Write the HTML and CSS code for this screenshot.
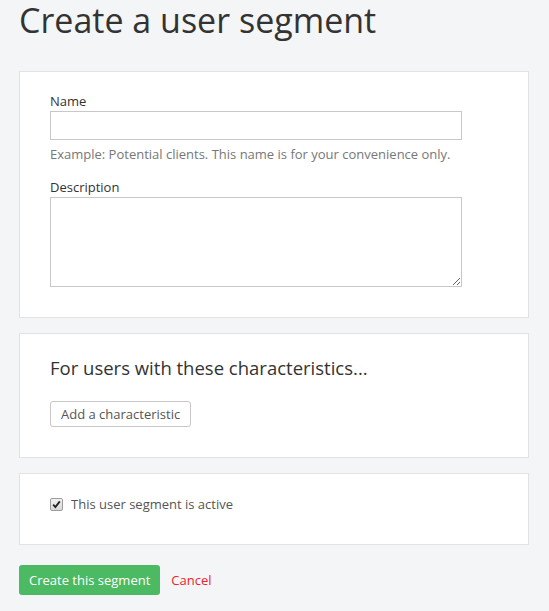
FILE: index.html
```html
<!DOCTYPE html>
<html lang="en">
<head>
<meta charset="utf-8">
<title>Create a user segment</title>
<link rel="stylesheet" href="styles.css">
</head>
<body>
<main class="page">
  <h1 class="page-title">Create a user segment</h1>
  <form class="segment-form">
    <section class="card">
      <div class="field">
        <label class="field-label" for="name">Name</label>
        <input class="text-input" id="name" type="text">
        <p class="help">Example: Potential clients. This name is for your convenience only.</p>
      </div>
      <div class="field field-desc">
        <label class="field-label" for="desc">Description</label>
        <textarea class="text-area" id="desc"></textarea>
      </div>
    </section>
    <section class="card card-chars">
      <h2 class="card-title">For users with these characteristics...</h2>
      <button type="button" class="btn-default">Add a characteristic</button>
    </section>
    <section class="card card-active">
      <label class="check-row">
        <span class="checkbox"><svg width="9" height="9" viewBox="0 0 9 9"><path d="M1.2 4.6 L3.4 7 L7.8 1.4" fill="none" stroke="#222" stroke-width="1.8"/></svg></span>
        <span class="check-text">This user segment is active</span>
      </label>
    </section>
    <div class="actions">
      <button type="button" class="btn-primary">Create this segment</button>
      <a class="cancel" href="#">Cancel</a>
    </div>
  </form>
</main>
</body>
</html>
```
FILE: styles.css
```css
* { box-sizing: border-box; }
html, body { margin: 0; padding: 0; }
body {
  background: #f4f5f7;
  font-family: "Open Sans", "Liberation Sans", sans-serif;
  font-size: 13px;
  color: #333;
}
.page {
  padding: 2px 20px 0 19px;
}
.page-title {
  margin: 0 0 32px;
  font-size: 34px;
  font-weight: 400;
  line-height: 37px;
  color: #333;
}
.segment-form {
  display: flex;
  flex-direction: column;
  gap: 15px;
}
.card {
  background: #fff;
  border: 1px solid #e1e2e4;
  padding: 20px 30px 30px;
}
.field {
  display: flex;
  flex-direction: column;
}
.field-desc { margin-top: 14px; }
.field-label {
  line-height: 19px;
  font-weight: 400;
  color: #333;
}
.text-input {
  width: 412px;
  height: 29px;
  border: 1px solid #c8c8c8;
  margin: 0;
  font: inherit;
  padding: 4px 6px;
}
.text-area {
  width: 412px;
  height: 90px;
  border: 1px solid #c8c8c8;
  margin: 0;
  font: inherit;
  padding: 4px 6px;
  resize: both;
}
.help {
  margin: 5px 0 0;
  line-height: 19px;
  color: #777;
}
.card-chars { padding-top: 22px; }
.card-title {
  margin: 0 0 21px;
  font-size: 18.5px;
  font-weight: 400;
  line-height: 24px;
  color: #333;
}
.btn-default {
  height: 26px;
  padding: 0 10px;
  background: #fff;
  border: 1px solid #c8c8c8;
  border-radius: 3px;
  font: inherit;
  color: #555;
}
.card-active { padding: 21px 30px 31px; }
.check-row {
  display: flex;
  align-items: center;
  gap: 8px;
  color: #555;
  line-height: 18px;
}
.checkbox {
  width: 13px;
  height: 13px;
  border: 1px solid #9c9c9c;
  border-radius: 2px;
  background: linear-gradient(#f2f2f2, #d8d8d8);
  display: flex;
  align-items: center;
  justify-content: center;
}
.checkbox svg { display: block; }
.actions {
  display: flex;
  align-items: center;
  gap: 11px;
  margin-top: 5px;
}
.btn-primary {
  height: 30px;
  padding: 0 10px;
  background: #4cb963;
  border: 0;
  border-radius: 3px;
  color: #fff;
  font: inherit;
}
.cancel {
  color: #f0222c;
  text-decoration: none;
}
```
